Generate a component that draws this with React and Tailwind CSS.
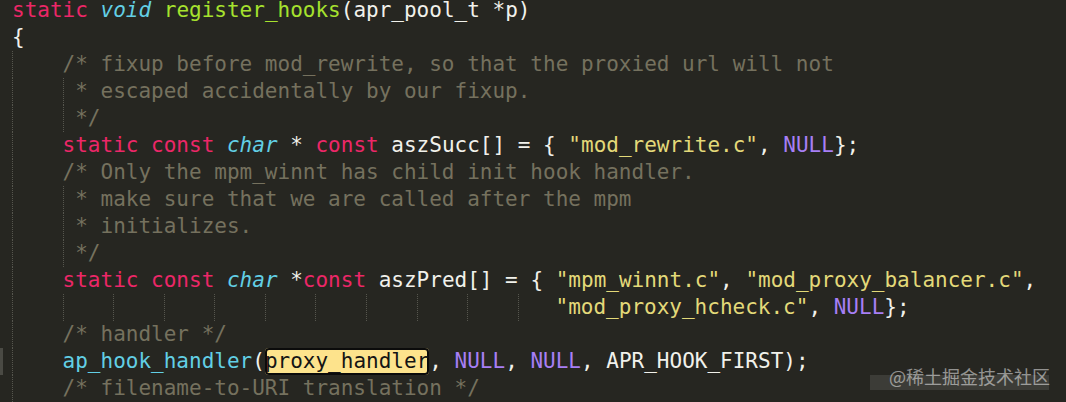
const tone = {
  k: 'text-[#ec2768]',
  t: 'italic text-[#62cfe5]',
  f: 'text-[#a6e22e]',
  s: 'text-[#e3d979]',
  c: 'text-[#75715e]',
  n: 'text-[#a77ff5]',
  a: 'text-[#62cfe5]',
  w: 'text-[#f1f1eb]',
}

const guideWidth = {
  4: 'w-[4ch]',
  3: 'w-[3ch]',
  1: 'w-[1ch]',
}

// g = number of indent guides, s = column where the text starts
const lines = [
  { g: 0, s: 0, t: [['static', 'k'], [' '], ['void', 't'], [' '], ['register_hooks', 'f'], ['(apr_pool_t *p)']] },
  { g: 0, s: 0, t: [['{']] },
  { g: 1, s: 4, t: [['/* fixup before mod_rewrite, so that the proxied url will not', 'c']] },
  { g: 2, s: 5, t: [['* escaped accidentally by our fixup.', 'c']] },
  { g: 2, s: 5, t: [['*/', 'c']] },
  {
    g: 1, s: 4,
    t: [['static', 'k'], [' '], ['const', 'k'], [' '], ['char', 't'], [' * '], ['const', 'k'], [' aszSucc[] = { '], ['"mod_rewrite.c"', 's'], [', '], ['NULL', 'n'], ['};']],
  },
  { g: 1, s: 4, t: [['/* Only the mpm_winnt has child init hook handler.', 'c']] },
  { g: 2, s: 5, t: [['* make sure that we are called after the mpm', 'c']] },
  { g: 2, s: 5, t: [['* initializes.', 'c']] },
  { g: 2, s: 5, t: [['*/', 'c']] },
  {
    g: 1, s: 4,
    t: [['static', 'k'], [' '], ['const', 'k'], [' '], ['char', 't'], [' *'], ['const', 'k'], [' aszPred[] = { '], ['"mpm_winnt.c"', 's'], [', '], ['"mod_proxy_balancer.c"', 's'], [',']],
  },
  { g: 11, s: 43, t: [['"mod_proxy_hcheck.c"', 's'], [', '], ['NULL', 'n'], ['};']] },
  { g: 1, s: 4, t: [['/* handler */', 'c']] },
  {
    g: 1, s: 4, mark: true,
    t: [['ap_hook_handler', 'a'], ['('], ['proxy_handler', 'hl'], [', '], ['NULL', 'n'], [', '], ['NULL', 'n'], [', APR_HOOK_FIRST);']],
  },
  { g: 1, s: 4, t: [['/* filename-to-URI translation */', 'c']] },
]

function Guides({ count, start }) {
  const out = []
  for (let i = 0; i < count; i++) {
    const col = i * 4
    const w = Math.min(4, start - col)
    out.push(
      <span
        key={i}
        className={`shrink-0 border-l border-dotted border-[#56564e] ${guideWidth[w]}`}
      />
    )
  }
  return out
}

function Token({ text, kind }) {
  if (kind === 'hl') {
    return (
      <span className="inline-block h-[27px] rounded-[4px] bg-[#fde38c] text-[#141414] shadow-[inset_0_0_0_2px_#0b0b0b]">
        {text}
      </span>
    )
  }
  return <span className={tone[kind || 'w']}>{text}</span>
}

export default function App() {
  return (
    <div className="relative h-[402px] w-full overflow-hidden bg-[#262621] font-['DejaVu_Sans_Mono',monospace] text-[21px]">
      <div className="mt-[-3px]">
        {lines.map((line, i) => (
          <div key={i} className="flex h-[27px] leading-[27px] whitespace-pre">
            <span className="flex w-[12px] shrink-0">
              {line.mark && <span className="w-[3px] bg-[#4a4a44]" />}
            </span>
            <Guides count={line.g} start={line.s} />
            <span>
              {line.t.map(([text, kind], j) => (
                <Token key={j} text={text} kind={kind} />
              ))}
            </span>
          </div>
        ))}
      </div>

      {/* site watermark */}
      <div className="absolute left-[870px] top-[375px] h-[15px] w-[179px] bg-white/10" />
      <div className="absolute left-[889px] top-[364px] font-['Noto_Sans_CJK_SC',sans-serif] text-[18px] leading-[24px] text-white/50">
        @稀土掘金技术社区
      </div>
    </div>
  )
}
